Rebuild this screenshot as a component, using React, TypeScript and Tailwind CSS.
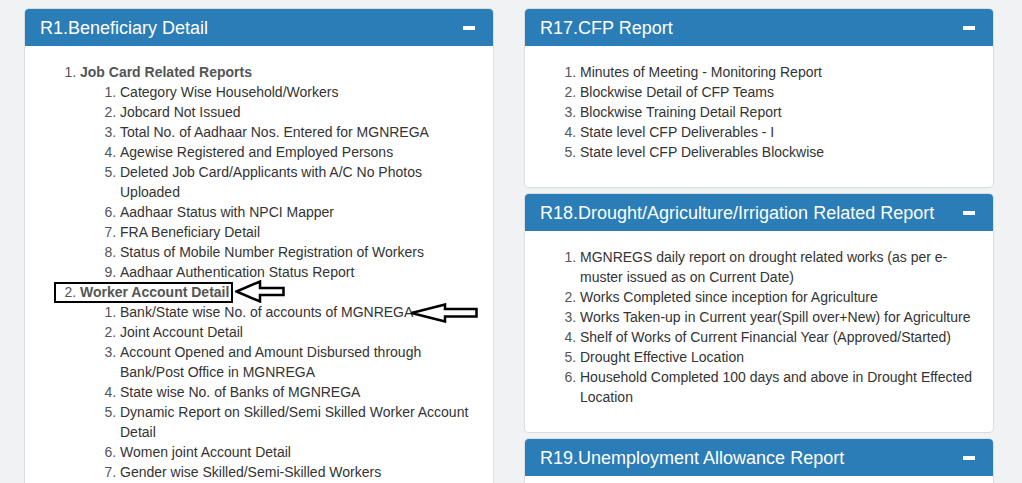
import React from "react"

type Group = { title: string; items: string[]; mark?: boolean }

const beneficiary: Group[] = [
  {
    title: "Job Card Related Reports",
    items: [
      "Category Wise Household/Workers",
      "Jobcard Not Issued",
      "Total No. of Aadhaar Nos. Entered for MGNREGA",
      "Agewise Registered and Employed Persons",
      "Deleted Job Card/Applicants with A/C No Photos Uploaded",
      "Aadhaar Status with NPCI Mapper",
      "FRA Beneficiary Detail",
      "Status of Mobile Number Registration of Workers",
      "Aadhaar Authentication Status Report",
    ],
  },
  {
    title: "Worker Account Detail",
    mark: true,
    items: [
      "Bank/State wise No. of accounts of MGNREGA",
      "Joint Account Detail",
      "Account Opened and Amount Disbursed through Bank/Post Office in MGNREGA",
      "State wise No. of Banks of MGNREGA",
      "Dynamic Report on Skilled/Semi Skilled Worker Account Detail",
      "Women joint Account Detail",
      "Gender wise Skilled/Semi-Skilled Workers",
    ],
  },
]

const cfp = [
  "Minutes of Meeting - Monitoring Report",
  "Blockwise Detail of CFP Teams",
  "Blockwise Training Detail Report",
  "State level CFP Deliverables - I",
  "State level CFP Deliverables Blockwise",
]

const drought = [
  "MGNREGS daily report on drought related works (as per e-muster issued as on Current Date)",
  "Works Completed since inception for Agriculture",
  "Works Taken-up in Current year(Spill over+New) for Agriculture",
  "Shelf of Works of Current Financial Year (Approved/Started)",
  "Drought Effective Location",
  "Household Completed 100 days and above in Drought Effected Location",
]

function Panel({ title, children }: { title: string; children: React.ReactNode }) {
  return (
    <div className="mb-[7px] overflow-hidden rounded-[4px] bg-white shadow-[0_0_0_1px_#dcdde0,0_1px_2px_rgba(0,0,0,0.06)]">
      <div className="flex h-[37px] items-center justify-between bg-[#2a7db7] pl-[15px] pr-[18px] text-[18px] text-white">
        <span>{title}</span>
        <span className="h-[4px] w-[12px] bg-white" />
      </div>
      <div className="px-[15px] pb-[25px] pt-[16px]">{children}</div>
    </div>
  )
}

function LeftArrow({ w, h, points }: { w: number; h: number; points: string }) {
  return (
    <svg width={w} height={h} viewBox={`0 0 ${w} ${h}`}>
      <polygon points={points} fill="white" stroke="black" strokeWidth="2.5" strokeLinejoin="miter" />
    </svg>
  )
}

function SimpleList({ items }: { items: string[] }) {
  return (
    <ol className="list-decimal pl-10 text-[#555]">
      {items.map((it) => (
        <li key={it}>
          <a className="cursor-pointer text-[#333]">{it}</a>
        </li>
      ))}
    </ol>
  )
}

export default function App() {
  return (
    <div
      className="h-[483px] overflow-hidden bg-[#f1f2f4] pl-[25px] pt-[9px] text-[14px] leading-[20px]"
      style={{ fontFamily: '"Liberation Sans", Arial, sans-serif' }}
    >
      <div className="flex gap-[32px]">
        <div className="w-[468px]">
          <Panel title="R1.Beneficiary Detail">
            <ol className="list-decimal pl-10 text-[#555]">
              {beneficiary.map((g) => (
                <li key={g.title}>
                  <div className="relative">
                    <b>{g.title}</b>
                    {g.mark && (
                      <>
                        <div className="absolute left-[-26px] top-0 h-[21px] w-[179px] border-2 border-black" />
                        <div className="absolute left-[155px] top-[-2px]">
                          <LeftArrow w={50} h={23} points="1.5,11.5 25,1.5 25,8 48.5,8 48.5,15 25,15 25,21.5" />
                        </div>
                      </>
                    )}
                  </div>
                  <ol className="list-decimal pl-10">
                    {g.items.map((it, i) => (
                      <li key={it} className="relative">
                        <a className="cursor-pointer text-[#333]">{it}</a>
                        {g.mark && i === 0 && (
                          <div className="absolute left-[290px] top-[1px]">
                            <LeftArrow w={68} h={20} points="1.5,10 35,1.5 35,6 66.5,6 66.5,13.5 35,13.5 35,18.5" />
                          </div>
                        )}
                      </li>
                    ))}
                  </ol>
                </li>
              ))}
            </ol>
          </Panel>
        </div>
        <div className="w-[468px]">
          <Panel title="R17.CFP Report">
            <SimpleList items={cfp} />
          </Panel>
          <Panel title="R18.Drought/Agriculture/Irrigation Related Report">
            <SimpleList items={drought} />
          </Panel>
          <Panel title="R19.Unemployment Allowance Report">
            <SimpleList items={["Unemployment Allowance Report"]} />
          </Panel>
        </div>
      </div>
    </div>
  )
}
